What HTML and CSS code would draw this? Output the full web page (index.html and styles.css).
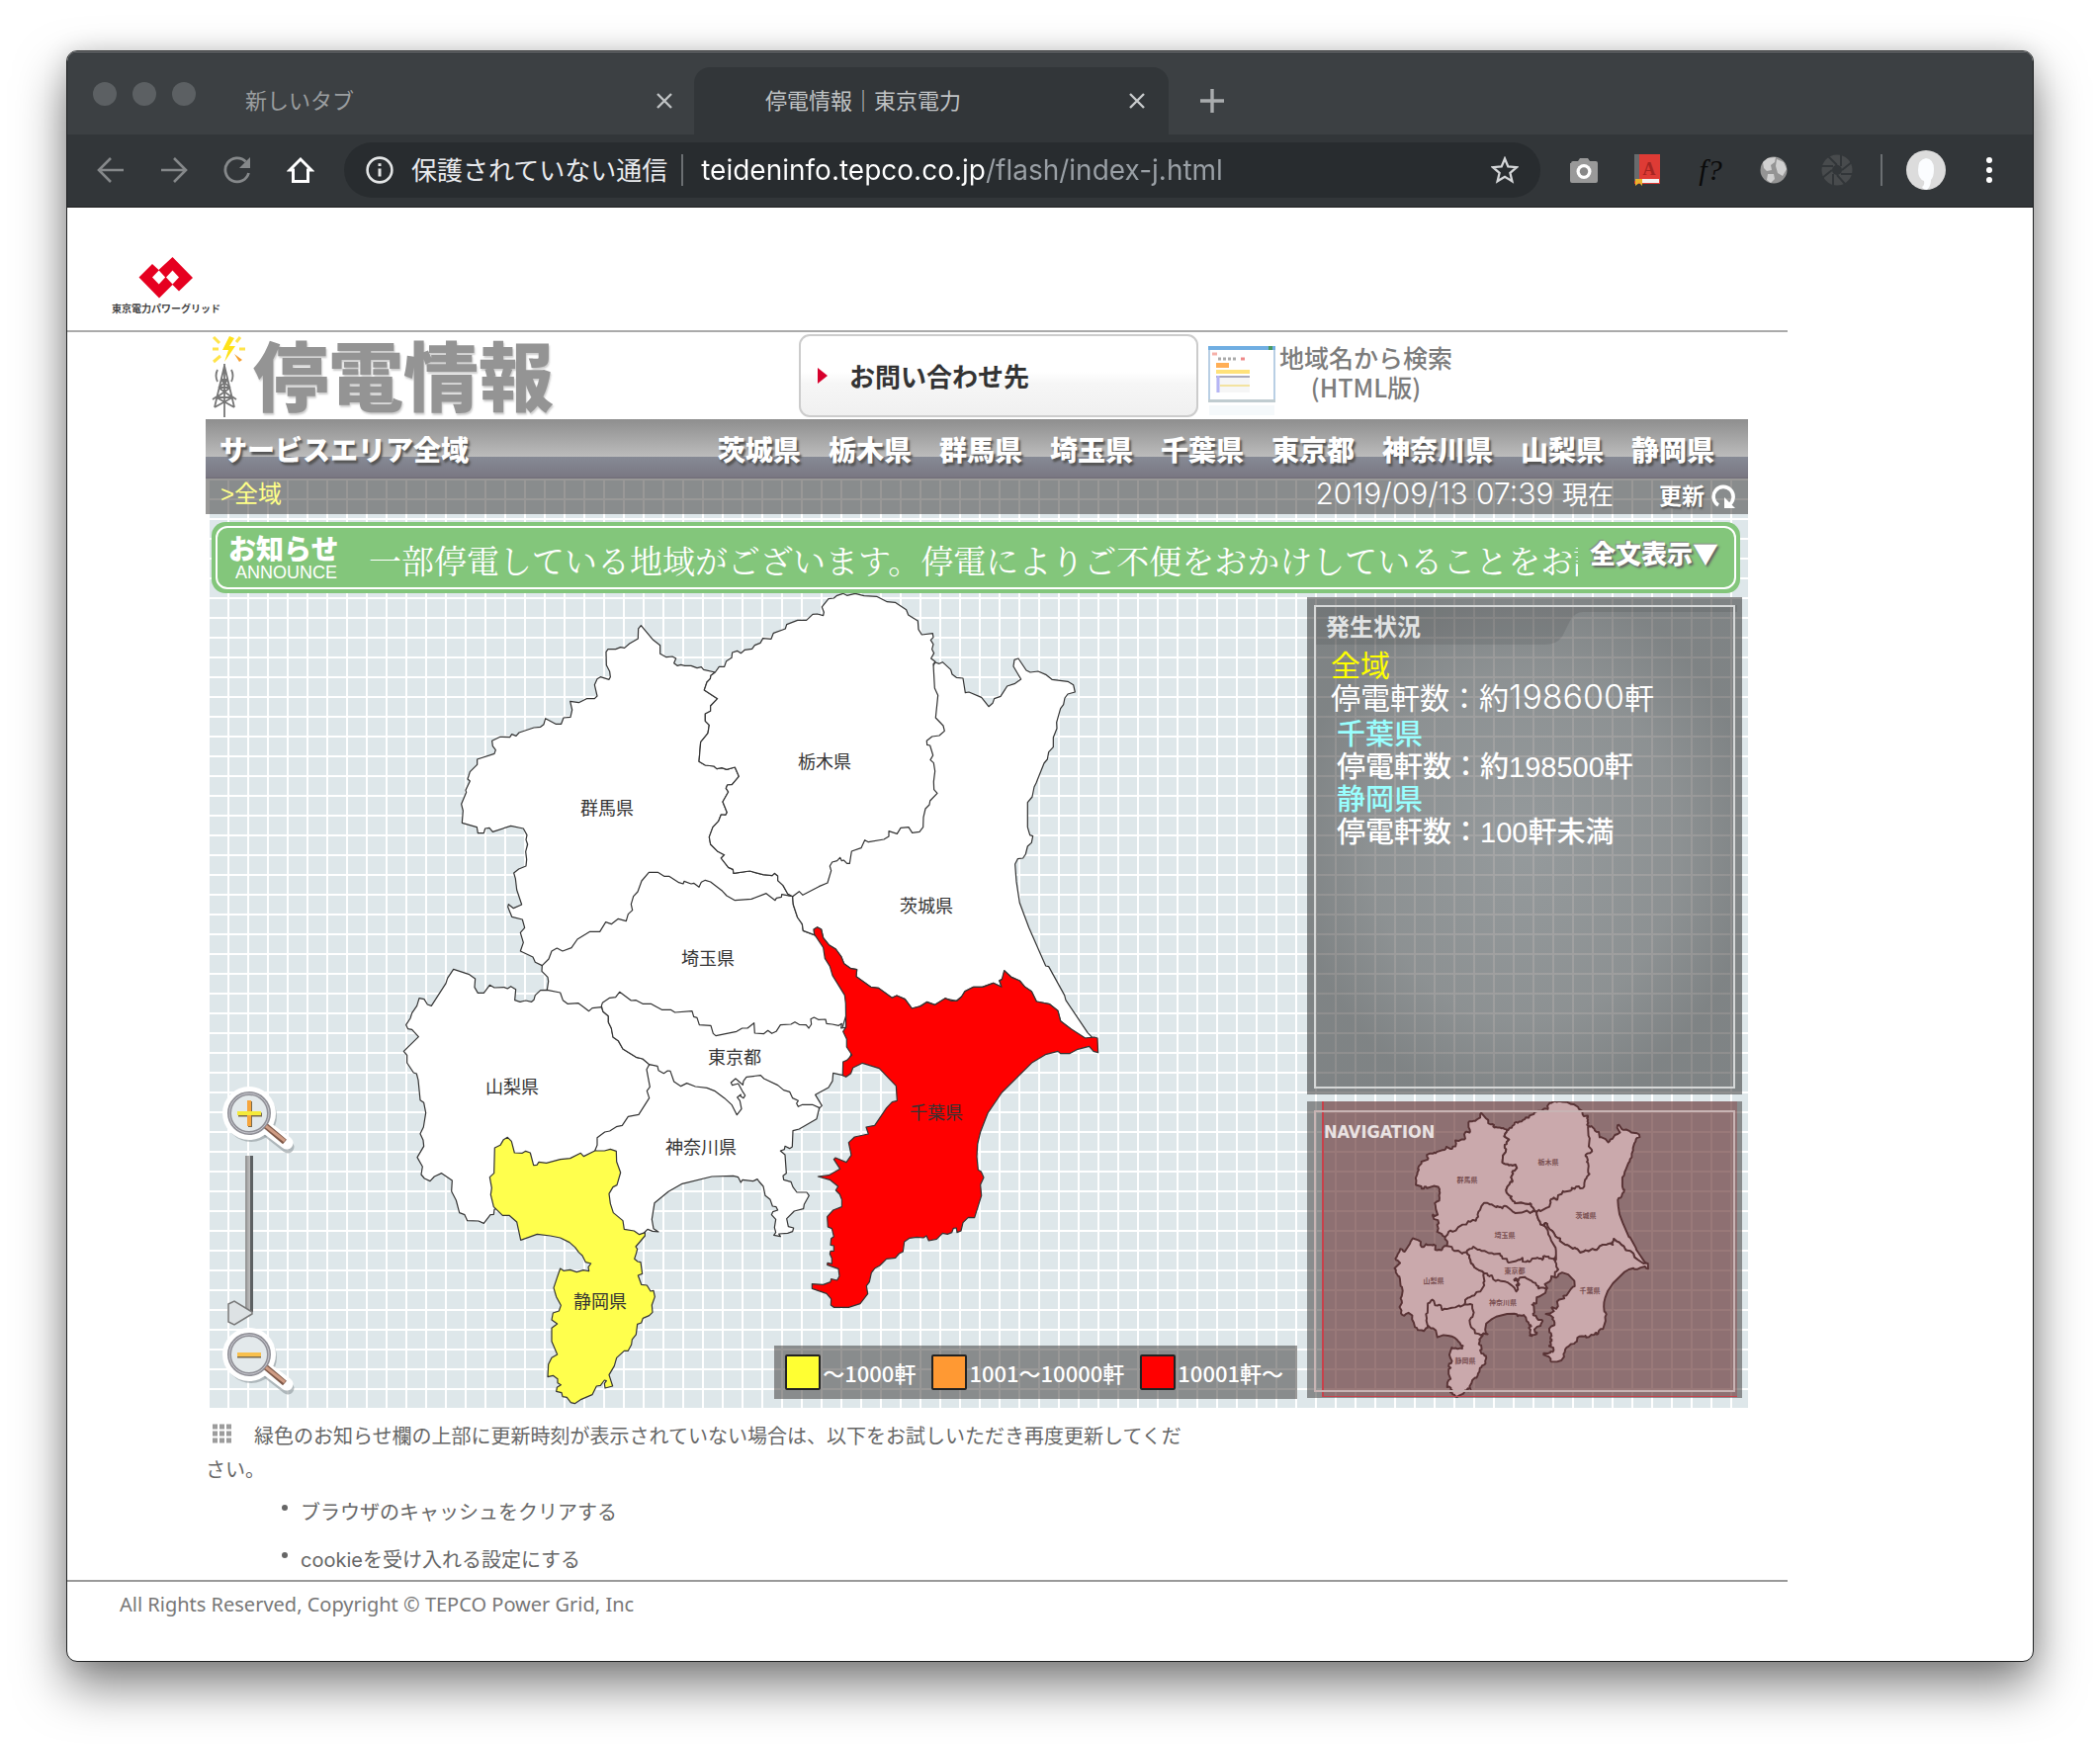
FILE: index.html
```html
<!DOCTYPE html>
<html lang="ja">
<head>
<meta charset="utf-8">
<title>停電情報｜東京電力</title>
<link rel="stylesheet" href="styles.css">
</head>
<body>
<div class="window">
  <div class="tabstrip">
    <div class="lights"><i></i><i></i><i></i></div>
    <div class="tab">
      <span class="tab-title">新しいタブ</span>
      <button class="icon-btn" aria-label="タブを閉じる"><svg width="16" height="16" viewBox="0 0 16 16"><path d="M1 1L15 15M15 1L1 15" stroke="#c0c3c5" stroke-width="2.4"/></svg></button>
    </div>
    <div class="tab tab-active">
      <span class="tab-title">停電情報｜東京電力</span>
      <button class="icon-btn" aria-label="タブを閉じる"><svg width="16" height="16" viewBox="0 0 16 16"><path d="M1 1L15 15M15 1L1 15" stroke="#c8cbcc" stroke-width="2.4"/></svg></button>
    </div>
    <button class="icon-btn new-tab" aria-label="新しいタブ"><svg width="24" height="24" viewBox="0 0 24 24"><path d="M12 0V24M0 12H24" stroke="#a9acae" stroke-width="3.4"/></svg></button>
  </div>

  <div class="toolbar">
    <div class="nav-buttons">
      <button class="icon-btn" aria-label="戻る"><svg width="28" height="28" viewBox="0 0 28 28"><path d="M27 14H3M14 2L2 14L14 26" fill="none" stroke="#85888a" stroke-width="2.6"/></svg></button>
      <button class="icon-btn" aria-label="進む"><svg width="28" height="28" viewBox="0 0 28 28"><path d="M1 14H25M14 2L26 14L14 26" fill="none" stroke="#85888a" stroke-width="2.6"/></svg></button>
      <button class="icon-btn" aria-label="再読み込み"><svg width="28" height="28" viewBox="0 0 28 28"><path d="M25.500 17A12 12 0 1 1 22.500 5.500" fill="none" stroke="#85888a" stroke-width="2.800"/><path d="M27 1V12H16Z" fill="#85888a"/></svg></button>
      <button class="icon-btn" aria-label="ホーム"><svg width="28" height="28" viewBox="0 0 28 28"><path d="M14 3L3 14H6.500V25.500H21.500V14H25Z" fill="none" stroke="#fff" stroke-width="3"/></svg></button>
    </div>
    <div class="omnibox">
      <svg width="28" height="28" viewBox="0 0 28 28"><circle cx="14" cy="14" r="12.400" fill="none" stroke="#e3e5e6" stroke-width="2.600"/><path d="M14 12.500V20.500M14 7.300V10" stroke="#e3e5e6" stroke-width="3"/></svg>
      <label class="security" for="url">保護されていない通信</label>
      <span class="omni-sep"></span>
      <input class="url" id="url" type="text" value="teideninfo.tepco.co.jp/flash/index-j.html">
      <button class="icon-btn" aria-label="ブックマーク"><svg width="28" height="28" viewBox="0 0 28 28"><path d="M14 2.500L17.300 10.500L26 11.200L19.400 16.900L21.400 25.300L14 20.800L6.600 25.300L8.600 16.900L2 11.200L10.700 10.500Z" fill="none" stroke="#d4d6d8" stroke-width="2.300"/></svg></button>
    </div>
    <div class="extensions">
      <button class="icon-btn" aria-label="カメラ"><svg width="28" height="28" viewBox="0 0 28 28"><path d="M1 7Q1 5 3 5H8L10 2H18L20 5H26Q28 5 28 7V25Q28 27 26 27H2Q0 27 0 25V7Z" fill="#999"/><circle cx="14" cy="15.500" r="7.500" fill="#fff"/><circle cx="14" cy="15.500" r="4.200" fill="#888"/></svg></button>
      <button class="icon-btn" aria-label="辞書"><svg width="28" height="32" viewBox="0 0 28 32"><path d="M1 0H27V30H1Z" fill="#de3b35"/><path d="M1 0H6V27H1Z" fill="#676b6d"/><path d="M6 25H26V29H6Z" fill="#f3f3f3"/><path d="M2 25H9V32L6 29L2 32Z" fill="#e9b32c"/><text x="16" y="21" text-anchor="middle" class="book-letter">A</text></svg></button>
      <button class="icon-btn ext-f" aria-label="関数">f?</button>
      <button class="icon-btn" aria-label="地球"><svg width="28" height="28" viewBox="0 0 28 28"><circle cx="14" cy="14" r="13.500" fill="#949494"/><path d="M3 6L8 2L16 1L15 6L11 9L12 14L7 15L4 12ZM17 3L24 6L27 13L23 20L18 17L16 10ZM8 18L14 18L15 23L11 27L7 24Z" fill="#d0d0d0"/></svg></button>
      <button class="icon-btn" aria-label="シャッター"><svg width="32" height="32" viewBox="0 0 32 32"><circle cx="16" cy="16" r="15.500" fill="#484b4d"/><circle cx="16" cy="16" r="5" fill="#323639"/><path d="M16 11L7 2M20 12V0M21 16L31 8M20 20H32M16 21L24 30M12 20V32M11 16L1 24M12 12H0" stroke="#323639" stroke-width="2"/></svg></button>
    </div>
    <span class="bar-sep"></span>
    <button class="icon-btn avatar" aria-label="プロフィール"><svg width="40" height="40" viewBox="0 0 40 40"><circle cx="20" cy="20" r="20" fill="#dcdcdc"/><path d="M12 20Q12 9 20 8Q28 9 28 19Q28 27 25 30Q25 36 21 40Q17 40 16 37Q19 35 18 31Q12 29 12 20Z" fill="#fbfdff"/></svg></button>
    <button class="icon-btn" aria-label="メニュー"><svg width="28" height="28" viewBox="0 0 28 28"><circle cx="14" cy="4" r="3" fill="#fff"/><circle cx="14" cy="14" r="3" fill="#fff"/><circle cx="14" cy="24" r="3" fill="#fff"/></svg></button>
  </div>

  <div class="page">
    <header class="site-header">
      <a class="logo" href="#">
        <svg width="56" height="42" viewBox="140 260 56 42"><path d="M140.500 280.500L154 267L160.500 273L174.500 260L195 281L181 294.500L174.500 288L161 301.500Z" fill="#e60020"/><path d="M160.700 273.500L167.200 280.500L160.700 287.500L154 280.500ZM174.500 273.500L181 280.500L174.500 287.500L168 280.500Z" fill="#fff"/></svg>
        <span>東京電力パワーグリッド</span>
      </a>
    </header>

    <main class="content">
      <div class="title-row">
        <div class="title">
          <svg width="42" height="84" viewBox="0 0 42 84"><path d="M20 2L13 16H19L15 28L26 12H20L25 4Z" fill="#ffe21a"/><path d="M4 3L10 9M3 15H9M4 28L11 22M31 3L27 8M36 15H30" stroke="#ffe44a" stroke-width="3"/><path d="M25 20L33 26L30 28Z" fill="#f5a030"/><path d="M15 32L5 74M15 32L25 74M11 46H19M9 54H21M7 64H23M11 46L21 54M19 46L9 54M9 54L23 64M21 54L7 64M7 64L25 74M23 64L5 74M15 30V84M8 36Q5 42 8 48M22 36Q25 42 22 48M3 66L9 62M27 66L21 62" fill="none" stroke="#777" stroke-width="1.800"/></svg>
          <h1>停電情報</h1>
        </div>
        <button class="contact"><svg width="10" height="16" viewBox="0 0 10 16"><path d="M0 0L10 8L0 16Z" fill="#d7002c"/></svg><span>お問い合わせ先</span></button>
        <a class="search-link" href="#">
          <svg width="68" height="70" viewBox="0 0 68 70"><path d="M1 1H67V56H1Z" fill="#fff" stroke="#b9cfe4" stroke-width="2"/><path d="M0 0H68V4H0Z" fill="#70aee2"/><path d="M61 0H65V4H61Z" fill="#4a9a63"/><path d="M0 54H68V57H0Z" fill="#c0ccd0"/><path d="M4 8H9" stroke="#f6b0a8" stroke-width="3"/><path d="M10 13H28" stroke="#aaa" stroke-width="3" stroke-dasharray="3 2"/><path d="M33 13H37" stroke="#e88" stroke-width="3"/><path d="M8 17H21V22H8Z" fill="#ffae55"/><path d="M8 24H42V28H8Z" fill="#ffe27a"/><path d="M8 30H42V47H8Z" fill="#f6f6f6"/><path d="M8 31H42" stroke="#aab" stroke-width="2"/><path d="M10 30V47" stroke="#b5b5f5" stroke-width="3"/><path d="M12 40H42" stroke="#f3e3a0" stroke-width="2"/><path d="M1 60H67V70H1Z" fill="#f5f9fb"/></svg>
          <span>地域名から検索<br>(HTML版)</span>
        </a>
      </div>

      <nav class="area-nav">
        <a href="#">サービスエリア全域</a>
        <div class="prefs">
          <a href="#">茨城県</a><a href="#">栃木県</a><a href="#">群馬県</a><a href="#">埼玉県</a><a href="#">千葉県</a><a href="#">東京都</a><a href="#">神奈川県</a><a href="#">山梨県</a><a href="#">静岡県</a>
        </div>
      </nav>

      <div class="board">
        <div class="subbar">
          <a class="crumb" href="#">&gt;全域</a>
          <span class="stamp">2019/09/13 07:39 <span>現在</span></span>
          <button class="refresh">更新<svg width="26" height="26" viewBox="0 0 26 26"><path d="M8 22A10 10 0 1 1 19 21.500" fill="none" stroke="#fff" stroke-width="3.600"/><path d="M14 14V25H25Z" fill="#fff"/></svg></button>
        </div>

        <section class="announce">
          <h2>お知らせ<small>ANNOUNCE</small></h2>
          <p class="ticker">一部停電している地域がございます。停電によりご不便をおかけしていることをお詫</p>
          <button class="full-text">全文表示▼</button>
        </section>

        <div class="stage">
          <div class="map">
            <svg class="map-svg" viewBox="212 600 1110 824">
              <defs>
                <path id="saitama" d="M445 1160L444 1177L462 1195L464 1208L460 1234L600 1340L1000 1400L1340 1400L1380 1270L1310 1100L1271 1067L1237 1054L1234 1034L1220 1014L1207 975L1205 950L1000 900L760 860L600 1000L440 1100Z"/>
                <path id="gunma" d="M970 270L935 262L928 254L915 257L897 250L878 250L866 247L855 250L845 242L851 228L840 222L822 224L803 214L803 188L782 172L745 128L737 138L736 168L710 183L695 196L683 194L668 200L645 200L639 208L640 248L650 268L652 284L648 292L622 284L612 290L604 308L612 342L604 350L580 350L556 362L530 358L536 384L531 406L510 408L503 427L486 427L455 410L450 428L440 436L420 438L375 453L366 463L353 458L347 467L318 466L293 478L295 494L304 506L300 517L248 534L248 550L226 572L219 594L226 600L213 628L215 634L200 670L205 690L202 727L247 740L250 758L268 758L272 744L285 742L295 754L350 736L388 744L399 764L396 778L401 792L395 814L398 838L396 858L374 867L359 879L364 896L368 930L383 975L358 986L343 974L341 982L353 1012L385 1020L392 1045L379 1060L388 1090L379 1116L417 1134L424 1150L445 1160L465 1140L474 1116L490 1107L507 1116L534 1106L552 1080L590 1057L620 1057L638 1028L655 1034L676 1018L700 1025L706 1004L719 992L715 974L722 950L735 936L747 903L769 877L796 877L815 889L830 889L860 908L873 912L876 904L897 912L905 910L921 922L928 907L940 901L956 906L992 934L1005 948L1030 962L1080 958L1125 941L1152 962L1156 955L1171 952L1172 944L1205 950L1190 942L1176 917L1160 902L1160 888L1150 880L1143 887L1115 884L1075 873L1026 880L1024 868L1010 862L988 834L998 824L978 814L956 792L952 770L963 740L980 722L988 702L1002 703L1006 695L993 663L1010 633L1003 622L1007 612L1021 611L1042 586L1030 558L1005 565L990 560L975 563L966 555L940 552L921 541L926 482L948 455L952 430L940 418L940 396L956 388L956 372L977 350L937 324L945 300L955 290L957 280Z"/>
                <path id="ibaraki" transform="translate(900 0)" d="M738 240L750 244L760 239L785 262L789 276L802 286L822 288L829 332L840 330L878 346L900 374L912 364L917 350L936 343L956 312L980 304L998 291L975 252L978 232L990 228L1014 264L1026 270L1050 267L1075 278L1092 292L1140 298L1157 308L1162 330L1140 336L1131 348L1127 368L1118 380L1106 422L1107 440L1096 468L1096 497L1082 512L1078 534L1068 546L1044 606L1038 618L1032 648L1018 665L1018 740L1025 764L1034 767L1030 787L1018 798L1012 822L1004 834L988 836L980 852L984 905L994 970L1022 1045L1073 1161L1082 1163L1130 1250L1134 1265L1200 1363L1214 1378L1193 1382L1160 1362L1118 1328L1110 1298L1085 1277L1045 1269L1030 1238L1010 1225L994 1206L968 1194L948 1176L942 1200L932 1205L939 1225L914 1213L880 1225L853 1225L828 1238L818 1254L802 1267L768 1260L737 1279L713 1270L690 1284L667 1290L646 1262L621 1251L606 1258L565 1228L542 1225L498 1193L500 1172L482 1169L461 1154L452 1132L436 1110L415 1097L398 1076L392 1050L380 1044L370 1050L371 1067L337 1054L334 1034L320 1014L307 975L305 950L560 700L700 300Z"/>
                <path id="tochigi" transform="translate(900 0)" d="M70 270L82 253L98 253L104 236L120 226L122 210L137 205L148 212L160 202L182 199L190 188L207 181L215 167L240 169L247 151L283 138L287 125L320 112L347 112L366 94L380 93L398 98L400 88L394 72L414 47L430 45L440 37L458 31L470 37L495 31L522 38L560 40L592 56L616 58L650 80L656 96L685 114L687 140L697 156L730 152L732 164L724 172L732 185L728 200L734 212L725 228L738 238L732 245L736 318L746 340L739 408L762 432L766 448L750 462L728 465L712 478L713 490L722 492L731 522L723 536L733 545L737 570L733 602L734 626L744 637L722 660L720 672L708 684L702 710L701 740L690 754L668 757L657 740L633 742L622 760L597 752L597 768L582 777L535 785L524 779L513 803L484 813L478 850L470 850L460 840L454 842L449 832L440 842L425 846L418 858L422 872L411 909L385 920L336 946L325 935L305 950L290 942L276 917L260 902L260 888L250 880L243 887L215 884L175 873L126 880L124 868L110 862L88 834L98 824L78 814L56 792L52 770L63 740L80 722L88 702L102 703L106 695L93 663L110 633L103 622L107 612L121 611L142 586L130 558L105 565L90 560L75 563L66 555L40 552L21 541L26 482L48 455L52 430L40 418L40 396L56 388L56 372L77 350L37 324L45 300L55 290L57 280Z"/>
                <path id="kanagawa" transform="translate(0 1110)" d="M770 350L900 350L1100 350L1270 460L1286 482L1278 515L1225 546L1206 551L1204 600L1196 605L1182 598L1180 608L1168 612L1182 624L1186 680L1176 688L1178 700L1200 706L1206 722L1218 738L1248 738L1255 748L1240 775L1238 788L1210 795L1187 818L1192 842L1208 846L1205 857L1190 862L1163 864L1168 872L1148 868L1154 860L1150 845L1154 820L1141 806L1145 797L1160 792L1155 782L1144 780L1137 760L1122 748L1116 720L1103 705L1098 698L1085 704L1053 700L1048 708L1040 692L1025 688L960 690L870 712L828 736L786 770L778 820L783 848L798 858L780 856L765 850L757 858L740 880L680 860L640 800L620 740L650 650L640 620L605 612L600 560L680 500L740 450L755 360Z"/>
                <path id="yamanashi" transform="translate(0 1110)" d="M460 124L500 132L508 155L522 166L555 164L587 188L597 179L625 176L630 190L646 203L646 222L655 240L660 267L676 278L690 303L730 328L750 333L770 350L762 365L772 418L763 430L770 452L738 502L706 508L688 535L670 539L650 552L635 555L612 572L612 595L605 612L605 640L420 680L340 640L320 780L300 790L298 805L288 806L268 832L252 825L218 824L210 806L194 800L184 762L170 735L172 702L140 680L118 690L105 704L88 696L78 684L82 660L66 632L86 598L84 580L75 560L85 540L92 497L86 466L75 458L69 397L64 378L55 375L35 345L35 322L25 310L70 266L50 244L38 242L32 230L45 210L50 194L65 172L72 149L87 152L97 168L109 172L153 104L158 88L176 61L222 76L242 90L240 116L250 133L268 133L286 109L300 117L330 116L340 120L350 113L365 122L362 155L378 160L395 156L413 160L420 154L424 140L440 125Z"/>
                <path id="tokyo" transform="translate(0 1110)" d="M625 172L628 163L650 148L668 146L680 130L715 156L730 155L750 166L775 166L808 184L835 184L848 192L900 188L905 205L915 208L922 230L957 232L964 256L972 263L1035 250L1052 240L1068 240L1088 224L1090 255L1117 257L1130 247L1142 256L1155 250L1168 230L1200 228L1212 221L1225 229L1246 230L1254 240L1262 228L1260 212L1270 207L1283 214L1305 213L1308 226L1325 228L1345 232L1354 226L1352 240L1365 238L1400 260L1370 360L1358 383L1328 376L1326 400L1314 420L1274 442L1294 475L1287 482L1265 472L1235 472L1222 478L1217 468L1222 460L1205 452L1196 433L1178 428L1160 413L1118 393L1108 383L1065 388L1056 400L1054 412L1032 393L1018 405L1022 413L1040 408L1052 430L1061 444L1056 452L1047 446L1048 441L1037 450L1045 460L1050 485L1036 503L1020 472L998 452L968 430L945 421L910 417L884 407L866 416L845 402L834 370L826 369L814 377L798 368L795 355L770 350L750 333L730 328L690 303L676 278L660 267L655 240L646 222L646 203L630 190Z"/>
                <path id="shizuoka" transform="translate(0 1110)" d="M340 571L352 583L361 618L385 619L395 613L409 618L419 656L429 655L435 646L458 649L500 638L530 635L562 619L571 629L605 612L634 612L652 607L670 613L671 645L683 678L672 716L660 722L648 742L652 772L661 800L690 824L694 850L724 855L740 866L757 860L757 870L729 903L734 910L730 925L725 940L735 948L744 950L749 985L736 990L746 1018L763 1020L774 1038L783 1036L787 1055L778 1080L780 1102L770 1112L751 1120L746 1134L734 1138L730 1170L718 1185L716 1200L706 1219L694 1219L671 1240L664 1265L648 1292L659 1326L636 1332L634 1318L640 1310L634 1308L622 1324L610 1326L597 1352L564 1366L544 1379L532 1376L520 1360L507 1358L504 1346L488 1342L490 1330L502 1322L492 1316L492 1304L478 1294L462 1298L464 1260L474 1240L491 1230L474 1190L474 1150L491 1137L474 1125L478 1104L496 1098L502 1081L488 1055L480 1028L490 998L500 969L510 976L530 973L550 980L570 974L587 977L585 965L593 954L577 950L567 930L556 920L545 905L528 890L500 876L470 870L430 865L380 883L368 828L345 808L325 808L298 782L289 745L292 725L286 692L299 680L301 603L318 595L328 578Z"/>
                <path id="chiba" transform="translate(1020 990)" d="M251 75L249 60L260 53L272 60L278 86L295 107L316 120L332 142L341 164L362 179L380 182L378 203L422 235L445 238L487 268L501 261L526 272L547 300L574 293L592 281L617 289L648 269L667 277L684 277L698 264L708 248L735 235L762 235L794 223L819 235L813 216L820 212L827 185L848 205L874 216L890 235L910 248L925 279L965 287L990 307L998 338L1030 362L1073 390L1100 387L1110 390L1112 434L1098 430L1085 415L1050 424L1025 437L998 437L990 430L952 440L912 464L820 555L777 618L755 675L746 712L744 750L748 790L757 795L765 813L755 835L758 868L737 935L718 934L702 950L696 975L684 980L682 966L673 967L668 980L655 985L640 982L622 1000L598 1005L591 990L582 996L562 994L540 997L524 1008L520 1038L508 1044L497 1057L470 1060L450 1080L435 1088L424 1102L418 1130L409 1142L413 1166L390 1196L355 1207L310 1207L301 1200L302 1182L288 1165L244 1150L244 1136L278 1138L300 1130L302 1121L320 1125L327 1112L324 1090L290 1078L291 1072L304 1075L304 1058L298 1045L300 1036L310 1036L310 1020L300 1018L302 998L310 992L304 968L292 963L290 932L308 912L334 902L334 880L328 864L316 852L323 840L298 820L262 810L295 806L329 787L310 758L315 753L348 767L363 745L355 707L373 690L415 681L408 660L434 655L470 602L487 584L502 580L499 535L448 482L397 466L368 480L362 497L347 508L337 503L338 462L350 457L365 441L349 417L349 393L338 370L347 357L346 285L343 260L306 200L298 172L283 148L278 115Z"/>
              </defs>
              <g class="regions" transform="translate(400 590) scale(.33333)">
                <use href="#saitama"/><use href="#gunma"/><use href="#ibaraki"/><use href="#tochigi"/><use href="#kanagawa"/><use href="#yamanashi"/><use href="#tokyo"/><use href="#shizuoka" class="low"/><use href="#chiba" class="high"/>
              </g>
              <g class="map-labels">
                <text x="614" y="824">群馬県</text><text x="834" y="777">栃木県</text><text x="937" y="923">茨城県</text><text x="716" y="976">埼玉県</text><text x="518" y="1106">山梨県</text><text x="743" y="1076">東京都</text><text x="709" y="1167">神奈川県</text><text x="607" y="1323">静岡県</text><text x="947" y="1132">千葉県</text>
              </g>
            </svg>

            <div class="zoom-control">
              <button class="icon-btn" aria-label="拡大"><svg width="74" height="70" viewBox="0 0 74 70"><circle cx="30" cy="31" r="26" fill="#8e979b" opacity=".6"/><path d="M48 47L67 62" stroke="#8e979b" stroke-width="13" stroke-linecap="round" opacity=".6"/><circle cx="28" cy="28" r="27" fill="#fff"/><path d="M46 43L66 58" stroke="#fff" stroke-width="13" stroke-linecap="round"/><circle cx="28" cy="28" r="20" fill="#e3e9eb" stroke="#8f8f96" stroke-width="4"/><circle cx="28" cy="28" r="20" fill="none" stroke="#c9c9d0" stroke-width="1"/><path d="M45 41L64 57" stroke="#7d5848" stroke-width="6"/><path d="M45 41L64 56" stroke="#cf9c84" stroke-width="3"/><path d="M29 16V42M17 29.500H41" stroke="#7a6a4a" stroke-width="4"/><path d="M28 15V41" stroke="#f7a53c" stroke-width="4"/><path d="M16 28H40" stroke="#f5ea3a" stroke-width="4"/></svg></button>
              <input class="zoom-range" type="range" min="0" max="10" value="0" aria-label="ズーム">
              <button class="icon-btn" aria-label="縮小"><svg width="74" height="70" viewBox="0 0 74 70"><circle cx="30" cy="31" r="26" fill="#8e979b" opacity=".6"/><path d="M48 47L67 62" stroke="#8e979b" stroke-width="13" stroke-linecap="round" opacity=".6"/><circle cx="28" cy="28" r="27" fill="#fff"/><path d="M46 43L66 58" stroke="#fff" stroke-width="13" stroke-linecap="round"/><circle cx="28" cy="28" r="20" fill="#e3e9eb" stroke="#8f8f96" stroke-width="4"/><circle cx="28" cy="28" r="20" fill="none" stroke="#c9c9d0" stroke-width="1"/><path d="M45 41L64 57" stroke="#7d5848" stroke-width="6"/><path d="M45 41L64 56" stroke="#cf9c84" stroke-width="3"/><path d="M16 29.500H40" stroke="#7a6a4a" stroke-width="4"/><path d="M16 28H40" stroke="#f9c04c" stroke-width="4"/></svg></button>
            </div>

            <ul class="legend">
              <li><i class="swatch low"></i>～1000軒</li>
              <li><i class="swatch mid"></i>1001～10000軒</li>
              <li><i class="swatch high"></i>10001軒～</li>
            </ul>
          </div>

          <aside class="side">
            <section class="panel status">
              <svg class="notch" width="428" height="42" viewBox="0 0 428 42"><path d="M0 0H428V7H272Q264 7 259 16L251 32Q245 40 234 40H0Z" fill="#000" opacity=".09"/></svg>
              <h3>発生状況</h3>
              <dl class="total">
                <dt>全域</dt>
                <dd>停電軒数：約<span>198600</span>軒</dd>
              </dl>
              <dl class="by-pref">
                <dt>千葉県</dt>
                <dd>停電軒数：約198500軒</dd>
                <dt>静岡県</dt>
                <dd>停電軒数：100軒未満</dd>
              </dl>
            </section>
            <section class="panel overview">
              <svg class="overview-svg" viewBox="1322 1114 440 300">
                <g class="mini" transform="translate(1407.500 1110) scale(.1217)">
                  <use href="#saitama"/><use href="#gunma"/><use href="#ibaraki"/><use href="#tochigi"/><use href="#kanagawa"/><use href="#yamanashi"/><use href="#tokyo"/><use href="#shizuoka"/><use href="#chiba"/>
                </g>
                <g class="mini-labels">
                  <text x="1484" y="1196">群馬県</text><text x="1566" y="1178">栃木県</text><text x="1604" y="1232">茨城県</text><text x="1522" y="1252">埼玉県</text><text x="1450" y="1298">山梨県</text><text x="1532" y="1288">東京都</text><text x="1520" y="1320">神奈川県</text><text x="1482" y="1379">静岡県</text><text x="1608" y="1308">千葉県</text>
                </g>
              </svg>
              <div class="viewport-box"></div>
              <h3>NAVIGATION</h3>
            </section>
          </aside>
        </div>
      </div>

      <div class="notes">
        <p><svg class="dots" width="22" height="20" viewBox="0 0 22 20"><path d="M1 3H21M1 10H21M1 17H21" stroke="#9c9c9c" stroke-width="5" stroke-dasharray="5 2"/></svg>緑色のお知らせ欄の上部に更新時刻が表示されていない場合は、以下をお試しいただき再度更新してください。</p>
        <ul>
          <li>ブラウザのキャッシュをクリアする</li>
          <li>cookieを受け入れる設定にする</li>
        </ul>
      </div>
    </main>

    <footer class="site-footer">All Rights Reserved, Copyright © TEPCO Power Grid, Inc</footer>
  </div>
</div>
</body>
</html>
```
FILE: styles.css
```css
* { box-sizing: border-box; }

body {
  margin: 0;
  padding: 51px 67px 83px;
  background: #fff;
  font-family: "Liberation Sans", "Noto Sans CJK JP", sans-serif;
  color: #666;
}

h1, h2, h3, p, ul, dl, dd { margin: 0; padding: 0; }
ul { list-style: none; }
a { color: inherit; text-decoration: none; }
svg { display: block; flex: none; }

button {
  border: 0;
  padding: 0;
  background: none;
  font: inherit;
  color: inherit;
}

.icon-btn { display: flex; align-items: center; justify-content: center; flex: none; }

.window {
  display: flex;
  flex-direction: column;
  min-height: calc(100vh - 134px);
  border: 1px solid #1f2122;
  border-radius: 11px;
  background: #fff;
  overflow: hidden;
  box-shadow: 0 24px 50px rgba(0, 0, 0, .5), 0 0 24px rgba(0, 0, 0, .12);
}

/* Tab strip */
.tabstrip {
  display: flex;
  align-items: flex-end;
  height: 84px;
  padding-left: 26px;
  background: #3c4043;
  border-top: 1px solid #7a7d7f;
}

.lights { display: flex; gap: 16px; margin-right: 24px; padding-bottom: 29px; }
.lights i { width: 24px; height: 24px; border-radius: 50%; background: #5c6063; }

.tab {
  display: flex;
  align-items: center;
  justify-content: space-between;
  width: 480px;
  height: 68px;
  padding: 0 22px 0 26px;
  font: 22px/32px "Noto Sans CJK JP", sans-serif;
  color: #9a9d9f;
}
.tab-title { padding-bottom: 4px; }

.tab-active {
  padding: 0 24px 0 72px;
  border-radius: 16px 16px 0 0;
  background: #323639;
  color: #c0c3c5;
}

.new-tab { height: 68px; margin-left: 32px; }

/* Toolbar */
.toolbar {
  display: flex;
  align-items: center;
  height: 74px;
  padding: 0 30px 2px;
  background: #323639;
  border-bottom: 1px solid #1f2020;
}

.nav-buttons, .extensions { display: flex; align-items: center; gap: 36px; }
.nav-buttons .icon-btn, .extensions .icon-btn { width: 28px; height: 32px; }

.omnibox {
  display: flex;
  align-items: center;
  flex: 1;
  height: 56px;
  margin: 0 30px;
  padding: 0 22px;
  border-radius: 28px;
  background: #282c2f;
}

.security {
  margin-left: 18px;
  padding-bottom: 2px;
  font: 26px/40px "Noto Sans CJK JP", sans-serif;
  color: #e8eaed;
  white-space: nowrap;
}

.omni-sep, .bar-sep { width: 2px; height: 32px; background: #6b6f72; }
.omni-sep { margin: 0 18px 0 14px; }
.bar-sep { margin: 0 24px 0 30px; }

.url {
  flex: 1;
  min-width: 0;
  padding: 0;
  border: 0;
  outline: 0;
  font: 28px/40px Inter, sans-serif;
  color: transparent;
  background: linear-gradient(90deg, #fff 288px, #9aa0a6 288px);
  background-clip: text;
  -webkit-background-clip: text;
}

.ext-f { font: italic 30px/32px "Liberation Serif", serif; color: #0b0b0b; }
.book-letter { font: bold 18px "Liberation Serif", serif; fill: #a52522; }
.avatar { margin-right: 30px; }

/* Page */
.page { margin-right: 248px; }

.site-header {
  height: 126px;
  padding: 50px 0 0 47px;
  border-bottom: 2px solid #aaa;
}

.logo {
  display: flex;
  flex-direction: column;
  align-items: center;
  width: 106px;
  font: bold 10px/20px "Noto Sans CJK JP", sans-serif;
  color: #444;
  white-space: nowrap;
}

.content { padding: 0 40px 3px 140px; }

.title-row {
  display: grid;
  grid-template-columns: 590px 404px 1fr;
  gap: 10px;
  align-items: center;
  height: 88px;
}

.title { display: flex; align-items: center; padding-left: 4px; }

h1 {
  margin-left: 2px;
  padding-bottom: 6px;
  font: 900 76px/82px "Noto Sans CJK JP", sans-serif;
  color: #949494;
  text-shadow: 1px 2px 2px #ccc;
}

.contact {
  display: flex;
  align-items: center;
  gap: 22px;
  height: 84px;
  padding-left: 17px;
  border: 2px solid #ccc;
  border-radius: 11px;
  background: linear-gradient(#fff 45%, #f6f6f6 60%, #f0f0f0);
  font: bold 26px/40px "Noto Sans CJK JP", sans-serif;
  color: #333;
}

.search-link {
  display: flex;
  align-items: center;
  gap: 4px;
  font: 500 25px/30px "Noto Sans CJK JP", sans-serif;
  color: #7c7c7c;
  text-align: center;
}
.search-link svg { margin-top: 10px; }
.search-link span { padding-bottom: 8px; }

.area-nav {
  display: flex;
  justify-content: space-between;
  align-items: center;
  height: 60px;
  padding: 0 34px 0 14px;
  background: linear-gradient(#8e8e8e, #bcbcbc 38px, #868a95 38px, #7a7883 58px, #6f6c76);
  font: 900 28px/40px "Noto Sans CJK JP", sans-serif;
  color: #fff;
  text-shadow: 2px 3px 2px #555;
}
.prefs { display: flex; gap: 28px; }

/* Board with a ruled background, 20px squares */
.board {
  padding-left: 4px;
  background:
    linear-gradient(270deg, #fff 2px, transparent 2px) 0 0 / 20px 20px content-box,
    linear-gradient(#fff 2px, transparent 2px) 0 0 / 20px 20px content-box,
    #dee7ea content-box;
  background-origin: content-box;
}

.subbar {
  display: flex;
  align-items: center;
  height: 36px;
  margin-left: -4px;
  padding: 0 12px 4px 15px;
  background: rgba(52, 49, 48, .5);
  color: #fff;
}

.crumb { margin-right: auto; font: 24px/32px "Liberation Sans", "Noto Sans CJK JP", sans-serif; color: #ff8; }
.stamp { font: 300 30px/32px Inter, "Noto Sans CJK JP", sans-serif; }
.stamp span { font-size: 26px; font-weight: 400; }

.refresh {
  display: flex;
  align-items: center;
  gap: 6px;
  margin-left: 46px;
  font: bold 23px/32px "Noto Sans CJK JP", sans-serif;
  text-shadow: 1px 2px 2px #555;
}
.refresh svg { margin-top: 4px; }

.announce {
  position: relative;
  display: flex;
  align-items: center;
  height: 72px;
  margin: 8px 8px 0 2px;
  padding: 0 22px 0 17px;
  border-radius: 14px;
  background: #83c67b;
  color: #fff;
}
.announce::before {
  content: "";
  position: absolute;
  inset: 4px;
  border: 2px solid #fff;
  border-radius: 12px;
}

.announce h2 {
  width: 142px;
  font: 900 28px/30px "Noto Sans CJK JP", sans-serif;
}
.announce small {
  display: block;
  padding-left: 7px;
  font: 18px/20px "Liberation Sans", sans-serif;
}

.ticker {
  flex: 1;
  min-width: 0;
  overflow: hidden;
  font: 33px/48px "Noto Serif CJK JP", "Noto Sans CJK JP", serif;
  white-space: nowrap;
  padding-top: 4px;
}

.full-text {
  margin: 0 0 10px 12px;
  font: 900 26px/32px "Noto Sans CJK JP", sans-serif;
  text-shadow: 2px 2px 2px #666, -1px -1px 1px #888;
}

.stage { display: grid; grid-template-columns: minmax(0, 1fr) 440px; padding-right: 6px; }
.map { position: relative; }
.map-svg, .overview-svg { width: 100%; height: auto; }

.regions { fill: #fff; stroke: #333; stroke-width: 3.6; stroke-linejoin: round; }
.regions .low { fill: #ffff4d; }
.regions .high { fill: #f00; }
.map-labels { font: 18px "Noto Sans CJK JP", sans-serif; fill: #333; text-anchor: middle; }

.zoom-control { position: absolute; left: 12px; bottom: 12px; display: flex; flex-direction: column; }

.zoom-range {
  appearance: none;
  width: 26px;
  height: 172px;
  margin: 1px 0 1px 6px;
  writing-mode: vertical-lr;
  direction: rtl;
  background: linear-gradient(90deg, #999 2px, #aaa 2px, #bcbcbc 5px, #5c6062 5px) 18px 0 / 8px 158px no-repeat;
}
.zoom-range::-webkit-slider-thumb {
  appearance: none;
  width: 26px;
  height: 26px;
  background: url("data:image/svg+xml,%3Csvg xmlns='http://www.w3.org/2000/svg' viewBox='0 0 26 26'%3E%3Cpath d='M1 4L7 1L25 12V14L7 25L1 22Z' fill='%23dde2e4' stroke='%23777' stroke-width='1.500'/%3E%3C/svg%3E") 0 0 / 26px 26px no-repeat;
}

.legend {
  position: absolute;
  right: 10px;
  bottom: 9px;
  display: flex;
  align-items: center;
  gap: 16px;
  height: 54px;
  padding: 0 14px 0 11px;
  background: rgba(52, 49, 48, .5);
  font: 500 22px/32px "Noto Sans CJK JP", sans-serif;
  color: #fff;
}
.legend li { display: flex; align-items: center; gap: 2px; }
.swatch { width: 36px; height: 36px; border: 2px solid #222; border-radius: 2px; }
.swatch.low { background: #ff3; }
.swatch.mid { background: #f93; }
.swatch.high { background: #f00; }

.side { display: flex; flex-direction: column; gap: 7px; padding: 4px 0 10px; }

.panel { position: relative; background: rgba(52, 49, 48, .5); }
.panel::after {
  content: "";
  position: absolute;
  inset: 8px 7px 6px;
  border: 2px solid #d6d8d8;
}

.status {
  height: 503px;
  padding: 11px 19px;
  background: radial-gradient(ellipse at 50% 50%, rgba(66, 67, 68, .47), rgba(60, 60, 60, .5) 50%, rgba(40, 40, 40, .52) 75%);
  color: #fff;
}
.notch { position: absolute; left: 7px; top: 8px; }
.status h3 { position: relative; font: bold 24px/36px "Noto Sans CJK JP", sans-serif; color: #e2e4e4; }
.status dl { position: relative; }
.total { margin-left: 5px; padding: 4px 0 6px; font: 30px/33px "Noto Sans CJK JP", sans-serif; }
.total dt { color: #ff0; }
.total span { font: 300 34px/30px Inter, sans-serif; }
.by-pref { margin-left: 11px; font: 500 29px/33px "Liberation Sans", "Noto Sans CJK JP", sans-serif; }
.by-pref dt { color: #9ff; }

.overview { height: 300px; }
.overview::after { border-color: #c8b4b4; inset: 9px 7px 6px; }
.overview h3 {
  position: absolute;
  left: 17px;
  top: 16px;
  font: bold 18px/30px "DejaVu Sans Condensed", "DejaVu Sans", sans-serif;
  color: #e9e2e2;
}
.mini { fill: #dedde0; stroke: #3d3436; stroke-width: 16; stroke-linejoin: round; }
.mini-labels { font: bold 7px "Noto Sans CJK JP", sans-serif; fill: #6a5c5e; text-anchor: middle; }
.viewport-box {
  position: absolute;
  inset: 0 5px 1px 15px;
  border: 1px solid #c8414b;
  border-width: 0 0 1px 2px;
  background: rgba(157, 50, 54, .3);
}

/* Notes below the map */
.notes { padding-top: 12px; font: 20px/34px Inter, "Noto Sans CJK JP", sans-serif; }
.notes p { max-width: 1000px; }
.dots { display: inline-block; margin: 0 21px 0 6px; }
.notes ul { display: grid; gap: 14px; padding: 9px 0 0 96px; }
.notes li::before {
  content: "";
  float: left;
  width: 6px;
  height: 6px;
  margin: 9px 13px 0 -19px;
  border-radius: 50%;
  background: #666;
}

.site-footer {
  padding: 7px 0 32px 53px;
  border-top: 2px solid #999;
  font: 20px/32px "Noto Sans", sans-serif;
  color: #777;
}
```
